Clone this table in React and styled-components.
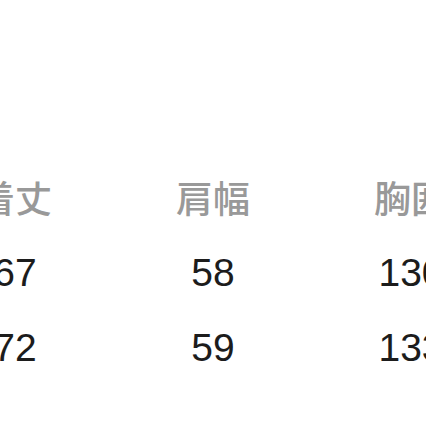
import React from 'react';
import styled, { createGlobalStyle } from 'styled-components';

const GlobalStyle = createGlobalStyle`
  html, body {
    margin: 0;
    padding: 0;
    background: #ffffff;
    overflow: hidden;
  }
  body {
    width: 426px;
    height: 426px;
    font-family: "Liberation Sans", "Noto Sans CJK JP", sans-serif;
  }
`;

const Page = styled.div`
  width: 426px;
  height: 426px;
  overflow: hidden;
  padding-top: 160px;
  box-sizing: border-box;
`;

const SizeTable = styled.div`
  display: grid;
  grid-template-columns: repeat(3, 198px);
  grid-auto-rows: 75px;
  margin-left: -84px;
  width: 594px;
`;

const Cell = styled.div`
  display: flex;
  align-items: center;
  justify-content: center;
  padding-top: ${p => (p.$head ? '5px' : '0')};
  box-sizing: border-box;
  font-size: ${p => (p.$head ? '37px' : '39px')};
  font-weight: ${p => (p.$head ? 500 : 400)};
  color: ${p => (p.$head ? '#999999' : '#1c1c1c')};
  line-height: 1;
  white-space: nowrap;
`;

const headers = ['着丈', '肩幅', '胸囲'];
const rows = [
  ['67', '58', '130'],
  ['72', '59', '133'],
];

export default function App() {
  return (
    <>
      <GlobalStyle />
      <Page>
        <SizeTable>
          {headers.map(h => (
            <Cell $head key={h}>{h}</Cell>
          ))}
          {rows.map((r, i) =>
            r.map((v, j) => <Cell key={i + '-' + j}>{v}</Cell>)
          )}
        </SizeTable>
      </Page>
    </>
  );
}
